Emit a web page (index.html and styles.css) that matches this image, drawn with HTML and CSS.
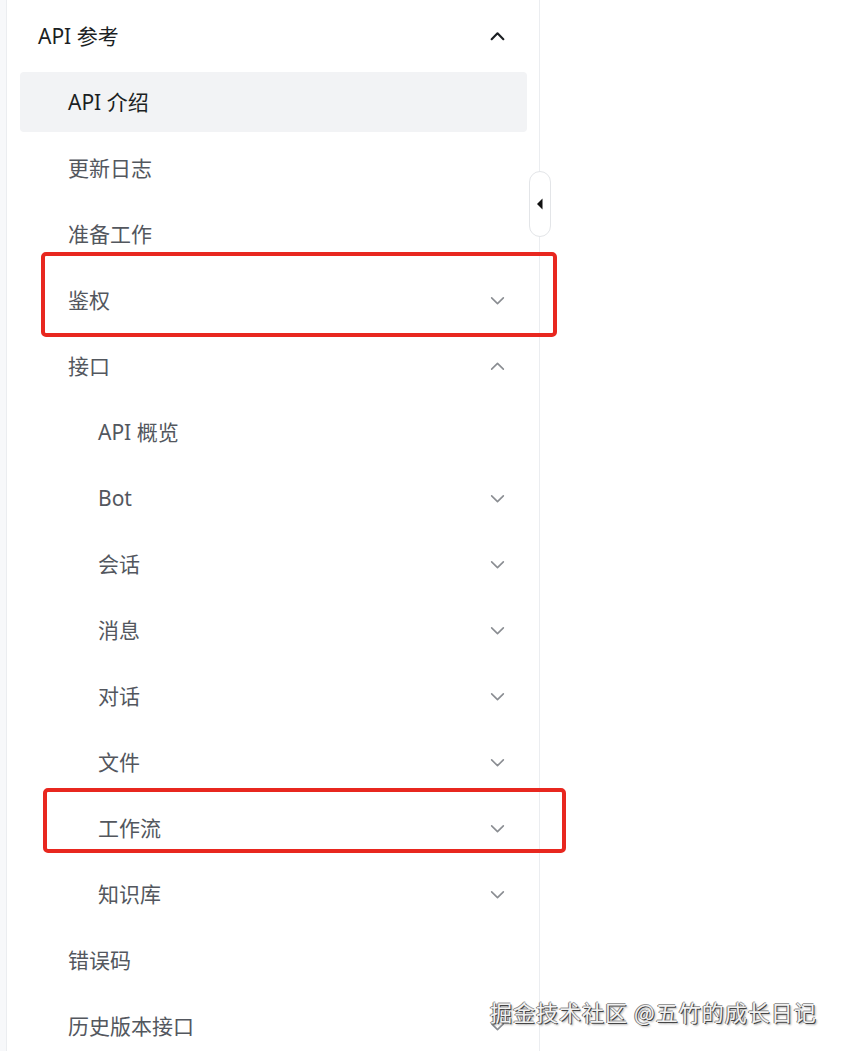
FILE: index.html
```html
<!DOCTYPE html>
<html lang="zh">
<head>
<meta charset="utf-8">
<link rel="stylesheet" href="styles.css">
</head>
<body>
<div class="page">
  <div class="edge"></div>
  <nav class="sidebar">
    <div class="row header"><span>API 参考</span><svg class="chev dark" viewBox="0 0 16 16"><path d="M2.5 10.5 L8 5 L13.5 10.5"/></svg></div>
    <div class="row l1 active"><span>API 介绍</span></div>
    <div class="row l1"><span>更新日志</span></div>
    <div class="row l1"><span>准备工作</span></div>
    <div class="row l1"><span>鉴权</span><svg class="chev" viewBox="0 0 16 16"><path d="M2.5 5.5 L8 11 L13.5 5.5"/></svg></div>
    <div class="row l1"><span>接口</span><svg class="chev" viewBox="0 0 16 16"><path d="M2.5 10.5 L8 5 L13.5 10.5"/></svg></div>
    <div class="row l2"><span>API 概览</span></div>
    <div class="row l2"><span>Bot</span><svg class="chev" viewBox="0 0 16 16"><path d="M2.5 5.5 L8 11 L13.5 5.5"/></svg></div>
    <div class="row l2"><span>会话</span><svg class="chev" viewBox="0 0 16 16"><path d="M2.5 5.5 L8 11 L13.5 5.5"/></svg></div>
    <div class="row l2"><span>消息</span><svg class="chev" viewBox="0 0 16 16"><path d="M2.5 5.5 L8 11 L13.5 5.5"/></svg></div>
    <div class="row l2"><span>对话</span><svg class="chev" viewBox="0 0 16 16"><path d="M2.5 5.5 L8 11 L13.5 5.5"/></svg></div>
    <div class="row l2"><span>文件</span><svg class="chev" viewBox="0 0 16 16"><path d="M2.5 5.5 L8 11 L13.5 5.5"/></svg></div>
    <div class="row l2"><span>工作流</span><svg class="chev" viewBox="0 0 16 16"><path d="M2.5 5.5 L8 11 L13.5 5.5"/></svg></div>
    <div class="row l2"><span>知识库</span><svg class="chev" viewBox="0 0 16 16"><path d="M2.5 5.5 L8 11 L13.5 5.5"/></svg></div>
    <div class="row l1"><span>错误码</span></div>
    <div class="row l1"><span>历史版本接口</span><svg class="chev" viewBox="0 0 16 16"><path d="M2.5 5.5 L8 11 L13.5 5.5"/></svg></div>
    <button class="collapse" aria-label="收起"><svg viewBox="0 0 8 14"><path d="M6.5 1.5 L1 7 L6.5 12.5 Z"/></svg></button>
  </nav>
  <main class="content"></main>
  <div class="mark mark-1"></div>
  <div class="mark mark-2"></div>
  <div class="watermark">掘金技术社区 @五竹的成长日记</div>
</div>
</body>
</html>
```

FILE: styles.css
```css
* { box-sizing: border-box; }
html, body { margin: 0; padding: 0; background: #fff; }
body {
  font-family: "Noto Sans", "Noto Sans CJK SC", sans-serif;
  width: 847px;
  height: 1051px;
  overflow: hidden;
}
.page {
  position: relative;
  display: flex;
  height: 1051px;
}
.edge {
  width: 7px;
  flex: none;
  background: #f7f8fa;
  border-right: 1px solid #ebedf0;
}
.sidebar {
  position: relative;
  width: 533px;
  flex: none;
  padding: 6px 12px 0 13px;
  border-right: 1px solid #ebedf0;
  display: flex;
  flex-direction: column;
  gap: 6px;
}
.row {
  height: 60px;
  flex: none;
  display: flex;
  align-items: center;
  justify-content: space-between;
  padding-right: 21px;
  font-size: 21px;
  color: #53575e;
  border-radius: 4px;
}
.row span { line-height: 1; }
.header { padding-left: 18px; color: #1c1f23; }
.l1 { padding-left: 48px; }
.l2 { padding-left: 78px; }
.active { background: #f2f3f5; color: #1c1f23; }
.chev {
  width: 17px;
  height: 17px;
  fill: none;
  stroke: #8a8d92;
  stroke-width: 1.5;
  stroke-linecap: round;
  stroke-linejoin: round;
}
.chev.dark { stroke: #1c1f23; stroke-width: 2; }
.collapse {
  position: absolute;
  right: -12px;
  top: 171px;
  width: 22px;
  height: 66px;
  padding: 0;
  border: 1px solid #e3e5e8;
  border-radius: 11px;
  background: #fff;
  display: flex;
  align-items: center;
  justify-content: center;
}
.collapse svg { width: 8px; height: 14px; fill: #111; }
.content { flex: 1; }
.mark {
  position: absolute;
  border: 4px solid #e8271f;
  border-radius: 5px;
}
.mark-1 { left: 41px; top: 252px; width: 516px; height: 85px; }
.mark-2 { left: 43px; top: 788px; width: 523px; height: 65px; }
.watermark {
  position: absolute;
  left: 490px;
  top: 996px;
  font-family: "Noto Sans CJK SC", sans-serif;
  font-size: 22px;
  letter-spacing: 1px;
  line-height: 30px;
  color: #f2f2f2;
  text-shadow: 1px 1px 0 #444, -1px 0 0 #777, 0 -1px 0 #999, 2px 2px 2px rgba(0,0,0,0.3);
  white-space: nowrap;
}
```
